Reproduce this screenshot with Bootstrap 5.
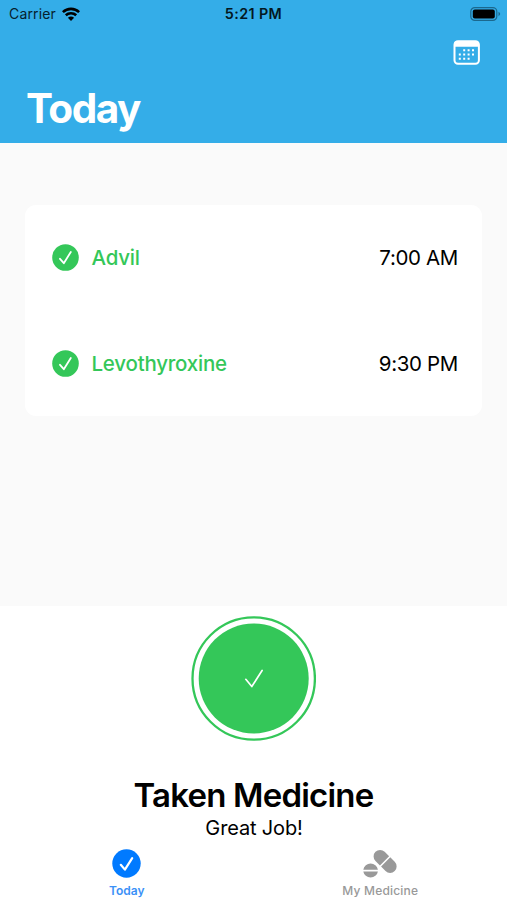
<!DOCTYPE html>
<html lang="en">
<head>
<meta charset="utf-8">
<meta name="viewport" content="width=device-width, initial-scale=1">
<title>Today</title>
<link href="https://cdn.jsdelivr.net/npm/bootstrap@5.3.0/dist/css/bootstrap.min.css" rel="stylesheet">
<style>
  body { font-family: Inter, "Liberation Sans", sans-serif; color: #000; height: 900px; overflow: hidden; }
  svg { display: block; flex: none; }
  .app-header { background: #34ade8; height: 143px; }
  .status { height: 28px; padding: 0 6px 0 9px; font-size: 14px; line-height: 28px; color: #06212e; }
  .carrier { letter-spacing: .15px; margin-right: 6px; }
  .status svg { margin-bottom: 1px; }
  .clock { font-weight: 600; font-size: 14.3px; color: #031822; letter-spacing: .4px; margin-right: 3px; }
  .tools { height: 50px; padding: 12px 27.5px 0 0; }
  .page-title { font-size: 40.5px; font-weight: 700; line-height: 50px; padding: 6px 0 0 26px; letter-spacing: -1.5px; }
  .schedule { background: #fafafa; height: 463px; padding: 62px 25px 0; }
  .doses { height: 211px; border-radius: 11px; background: #fff; overflow: hidden; }
  .dose { height: 106px; padding: 0 24px 0 27px; gap: 12.5px; font-size: 20.5px; line-height: 28px; }
  .dose svg { margin-bottom: 1px; }
  .dose-name { color: #34c759; font-weight: 500; letter-spacing: -.22px; }
  .dose-time { letter-spacing: -.35px; }
  .summary { padding-top: 10px; }
  .headline { font-size: 33px; font-weight: 600; line-height: 40px; margin-top: 34px; letter-spacing: -.8px; }
  .praise { font-size: 20px; line-height: 26px; letter-spacing: -.15px; padding-left: 1px; }
  .tabs { margin-top: 7px; }
  .tab-item { font-size: 12px; font-weight: 500; line-height: 16px; color: #999; letter-spacing: .2px; }
  .tab-item.current { color: #3b91f7; font-weight: 600; letter-spacing: 0; }
  .tab-item svg { margin: .5px 0 5.5px; }
</style>
</head>
<body class="bg-white d-flex flex-column">
<header class="app-header">
  <div class="status row g-0 align-items-center">
    <div class="col d-flex align-items-center"><span class="carrier">Carrier</span>
      <svg width="18" height="14" viewBox="0 0 18 14" fill="none" stroke="#000" stroke-width="2.6"><path d="M.9 5.1C5.4.8 12.6.8 17.1 5.1M3.8 8.3c2.9-2.8 7.5-2.8 10.4 0"/><path d="M9 13.9 5.9 10.8q3.1-2.6 6.2 0z" fill="#000" stroke="none"/></svg>
    </div>
    <div class="col-auto clock">5:21 PM</div>
    <div class="col d-flex justify-content-end">
      <svg width="31" height="14" viewBox="0 0 31 14"><rect x=".8" y=".6" width="26" height="12.8" rx="4" fill="none" stroke="#1b688e" stroke-width="1.2"/><rect x="2.8" y="2.5" width="22" height="9" rx="2" fill="#000"/><path d="M28.5 4.8q3.4 2.2 0 4.4z" fill="#1b688e"/></svg>
    </div>
  </div>
  <div class="tools d-flex justify-content-end">
    <svg width="27" height="25" viewBox="0 0 27 25"><rect x="1.5" y="1.3" width="24.4" height="22.4" rx="3.5" fill="none" stroke="#fff" stroke-width="2"/><path d="M1 6.8V4q0-3 3-3h19q3 0 3 3v2.8z" fill="#fff"/><path d="M10.2 9.2h2v2h-2zM14.6 9.2h2v2h-2zM19 9.2h2v2h-2zM5.8 13.4h2v2h-2zM10.2 13.4h2v2h-2zM14.6 13.4h2v2h-2zM19 13.4h2v2h-2zM5.8 17.7h2v2h-2zM10.2 17.7h2v2h-2zM14.6 17.7h2v2h-2z" fill="#fff"/></svg>
  </div>
  <h1 class="page-title text-white m-0">Today</h1>
</header>
<main class="schedule">
  <div class="doses">
    <div class="dose d-flex align-items-center">
      <svg width="27" height="27" viewBox="0 0 27 27"><circle cx="13.5" cy="13.5" r="13.3" fill="#34c759"/><path d="m8 14.8 3.8 4.4 7-11.2" fill="none" stroke="#fff" stroke-width="1.8" stroke-linecap="round" stroke-linejoin="round"/></svg>
      <span class="dose-name">Advil</span><span class="dose-time ms-auto">7:00 AM</span>
    </div>
    <div class="dose d-flex align-items-center">
      <svg width="27" height="27" viewBox="0 0 27 27"><circle cx="13.5" cy="13.5" r="13.3" fill="#34c759"/><path d="m8 14.8 3.8 4.4 7-11.2" fill="none" stroke="#fff" stroke-width="1.8" stroke-linecap="round" stroke-linejoin="round"/></svg>
      <span class="dose-name">Levothyroxine</span><span class="dose-time ms-auto">9:30 PM</span>
    </div>
  </div>
</main>
<section class="summary d-flex flex-column align-items-center">
  <svg width="125" height="125" viewBox="0 0 125 125"><circle cx="62.7" cy="62.5" r="61.2" fill="#fff" stroke="#34c759" stroke-width="2.3"/><circle cx="62.7" cy="62.5" r="55" fill="#34c759"/><path d="m54.8 63.3 6 7.2 10.3-16" fill="none" stroke="#fff" stroke-width="1.7" stroke-linecap="round" stroke-linejoin="round"/></svg>
  <h2 class="headline mb-0">Taken Medicine</h2>
  <p class="praise mb-0">Great Job!</p>
</section>
<nav class="tabs row g-0">
  <a class="tab-item current col-6 d-flex flex-column align-items-center text-decoration-none" href="#">
    <svg width="29" height="29" viewBox="0 0 29 29"><circle cx="14.5" cy="14.5" r="14.2" fill="#007aff"/><path d="m8.8 15.8 4.1 4.8 7.3-11.5" fill="none" stroke="#fff" stroke-width="2.2" stroke-linecap="round" stroke-linejoin="round"/></svg>
    <span>Today</span>
  </a>
  <a class="tab-item col-6 d-flex flex-column align-items-center text-decoration-none" href="#">
    <svg width="34" height="29" viewBox="0 0 34 29" fill="#999"><g transform="translate(22.1 12.4) rotate(45)"><path d="M-.8-6.5H-7.1a6.5 6.5 0 0 0 0 13H-.8zM.8-6.5H7.1A6.5 6.5 0 0 1 7.1 6.5H.8z"/></g><path d="M.3 20.7a7.4 7.4 0 0 1 14.6 0zM.3 22.4a7.4 7.4 0 0 0 14.6 0z"/></svg>
    <span>My Medicine</span>
  </a>
</nav>
<script src="https://cdn.jsdelivr.net/npm/bootstrap@5.3.0/dist/js/bootstrap.bundle.min.js"></script>
</body>
</html>
